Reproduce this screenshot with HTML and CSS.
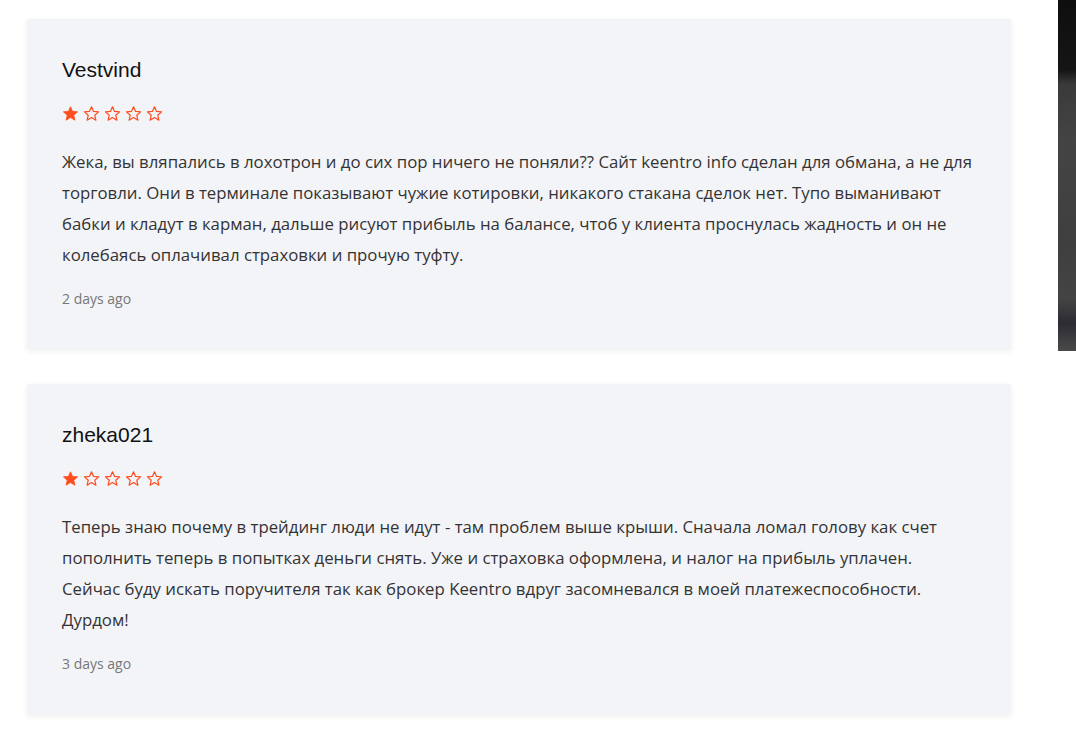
FILE: index.html
```html
<!DOCTYPE html>
<html>
<head>
<meta charset="utf-8">
<link rel="stylesheet" href="styles.css">
</head>
<body>
<div class="page">
  <div class="reviews">
    <div class="card">
      <div class="name">Vestvind</div>
      <div class="stars">
        <svg class="star" viewBox="0 0 24 24"><path class="full" d="M12 2.5l2.9 6.6 7.1.6-5.4 4.7 1.6 7-6.2-3.7-6.2 3.7 1.6-7L2 9.7l7.1-.6z"/></svg>
        <svg class="star" viewBox="0 0 24 24"><path class="empty" d="M12 2.5l2.9 6.6 7.1.6-5.4 4.7 1.6 7-6.2-3.7-6.2 3.7 1.6-7L2 9.7l7.1-.6z"/></svg>
        <svg class="star" viewBox="0 0 24 24"><path class="empty" d="M12 2.5l2.9 6.6 7.1.6-5.4 4.7 1.6 7-6.2-3.7-6.2 3.7 1.6-7L2 9.7l7.1-.6z"/></svg>
        <svg class="star" viewBox="0 0 24 24"><path class="empty" d="M12 2.5l2.9 6.6 7.1.6-5.4 4.7 1.6 7-6.2-3.7-6.2 3.7 1.6-7L2 9.7l7.1-.6z"/></svg>
        <svg class="star" viewBox="0 0 24 24"><path class="empty" d="M12 2.5l2.9 6.6 7.1.6-5.4 4.7 1.6 7-6.2-3.7-6.2 3.7 1.6-7L2 9.7l7.1-.6z"/></svg>
      </div>
      <p class="text">Жека, вы вляпались в лохотрон и до сих пор ничего не поняли?? Сайт keentro info сделан для обмана, а не для торговли. Они в терминале показывают чужие котировки, никакого стакана сделок нет. Тупо выманивают бабки и кладут в карман, дальше рисуют прибыль на балансе, чтоб у клиента проснулась жадность и он не колебаясь оплачивал страховки и прочую туфту.</p>
      <div class="date">2 days ago</div>
    </div>
    <div class="card">
      <div class="name">zheka021</div>
      <div class="stars">
        <svg class="star" viewBox="0 0 24 24"><path class="full" d="M12 2.5l2.9 6.6 7.1.6-5.4 4.7 1.6 7-6.2-3.7-6.2 3.7 1.6-7L2 9.7l7.1-.6z"/></svg>
        <svg class="star" viewBox="0 0 24 24"><path class="empty" d="M12 2.5l2.9 6.6 7.1.6-5.4 4.7 1.6 7-6.2-3.7-6.2 3.7 1.6-7L2 9.7l7.1-.6z"/></svg>
        <svg class="star" viewBox="0 0 24 24"><path class="empty" d="M12 2.5l2.9 6.6 7.1.6-5.4 4.7 1.6 7-6.2-3.7-6.2 3.7 1.6-7L2 9.7l7.1-.6z"/></svg>
        <svg class="star" viewBox="0 0 24 24"><path class="empty" d="M12 2.5l2.9 6.6 7.1.6-5.4 4.7 1.6 7-6.2-3.7-6.2 3.7 1.6-7L2 9.7l7.1-.6z"/></svg>
        <svg class="star" viewBox="0 0 24 24"><path class="empty" d="M12 2.5l2.9 6.6 7.1.6-5.4 4.7 1.6 7-6.2-3.7-6.2 3.7 1.6-7L2 9.7l7.1-.6z"/></svg>
      </div>
      <p class="text">Теперь знаю почему в трейдинг люди не идут - там проблем выше крыши. Сначала ломал голову как счет пополнить теперь в попытках деньги снять. Уже и страховка оформлена, и налог на прибыль уплачен.<br>Сейчас буду искать поручителя так как брокер Keentro вдруг засомневался в моей платежеспособности. Дурдом!</p>
      <div class="date">3 days ago</div>
    </div>
  </div>
  <div class="side"></div>
</div>
</body>
</html>
```

FILE: styles.css
```css
html, body {
  margin: 0;
  padding: 0;
  background: #ffffff;
}
.page {
  display: flex;
  align-items: flex-start;
  gap: 47px;
  width: 1076px;
  height: 729px;
  overflow: hidden;
}
.reviews {
  display: flex;
  flex-direction: column;
  gap: 35px;
  padding: 19px 0 0 27px;
}
.card {
  width: 984px;
  height: 330px;
  box-sizing: border-box;
  padding: 37px 35px 0 35px;
  background: #f3f4f8;
  box-shadow: 0 2px 6px rgba(0, 0, 0, 0.07);
}
.name {
  font-family: "Liberation Sans", Arial, sans-serif;
  font-size: 21px;
  line-height: 28px;
  color: #111111;
}
.stars {
  display: flex;
  gap: 4px;
  margin-top: 20px;
  height: 18px;
  align-items: center;
}
.star {
  width: 17px;
  height: 17px;
}
.star .full {
  fill: #ff4d1f;
  stroke: #ff4d1f;
  stroke-width: 1.2;
  stroke-linejoin: round;
}
.star .empty {
  fill: none;
  stroke: #ff4d1f;
  stroke-width: 1.7;
  stroke-linejoin: round;
}
.text {
  margin: 24px 0 0 0;
  font-family: "Open Sans", sans-serif;
  font-size: 16.8px;
  line-height: 31px;
  color: #333333;
}
.date {
  margin-top: 18px;
  font-family: "Open Sans", sans-serif;
  font-size: 14px;
  line-height: 21px;
  color: #777777;
}
.side {
  flex: none;
  width: 30px;
  height: 351px;
  background: linear-gradient(180deg, #0e0e0e 0%, #151515 20%, #3a3a3a 24%, #444444 40%, #3f3f3f 70%, #444444 85%, #2d2b33 92%, #4a4a4a 100%);
}
```
